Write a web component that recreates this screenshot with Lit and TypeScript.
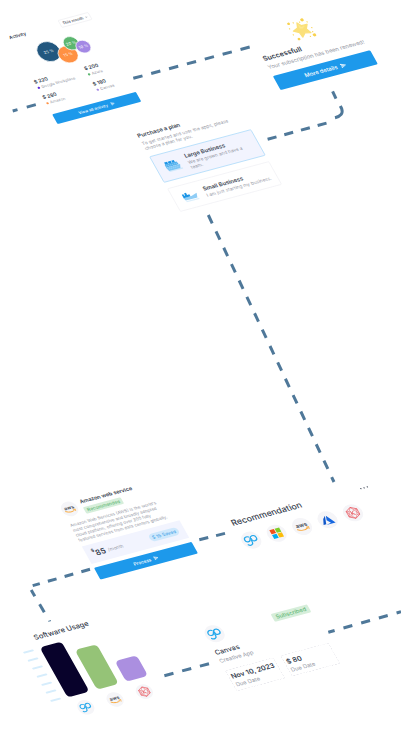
import { LitElement, html, svg, css, TemplateResult } from "lit";
import { customElement, property } from "lit/decorators.js";
import { classMap } from "lit/directives/class-map.js";
import { styleMap } from "lit/directives/style-map.js";

const arrow = html`<svg class="arrow" viewBox="0 0 20 20" aria-hidden="true">
  <path d="M2.500 3 L18 10 L2.500 17 L5.500 10 Z M5.500 10 H11" fill="none" stroke="currentColor" stroke-width="2.400" stroke-linejoin="round" stroke-linecap="round" />
</svg>`;

const marks: Record<string, TemplateResult> = {
  go: svg`<g fill="none" stroke="#23a8ec" stroke-width="3.200" stroke-linecap="round" stroke-linejoin="round">
      <path d="M22 14 C17 10 9 13 9 20 C9 27 19 29 22 22 C24 17 26 13 31 13 C36 13 39 17 39 21 C39 25 36 28 32 28 C27 28 25 24 26 20" />
      <path d="M24 24 V30 C24 37 15 39 11 34" />
    </g>`,
  microsoft: svg`<rect x="11" y="11" width="12" height="12" fill="#f1511b" />
    <rect x="25" y="11" width="12" height="12" fill="#80cc28" />
    <rect x="11" y="25" width="12" height="12" fill="#00adef" />
    <rect x="25" y="25" width="12" height="12" fill="#fbbc09" />`,
  aws: svg`<text x="24" y="25" text-anchor="middle" font-family="Inter, sans-serif" font-size="15" font-weight="600" fill="#3d4653">aws</text>
    <path d="M9 29 Q23 39 36 31" fill="none" stroke="#f9a83a" stroke-width="2.600" stroke-linecap="round" />
    <path d="M33 28.500 L39 28.500 L37.500 34" fill="none" stroke="#f9a83a" stroke-width="2" stroke-linecap="round" stroke-linejoin="round" />`,
  azure: svg`<path d="M23 12 L15 19 L8 35 H15 Z" fill="#0f56c9" />
    <path d="M25 13 L39 37 H14 L28 34 L21 25 Z" fill="#1667e0" />`,
  hex: svg`<g fill="none" stroke="#e9545c" stroke-width="1.800" stroke-linejoin="round">
      <path d="M24 8 L38 16 V32 L24 40 L10 32 V16 Z" />
      <path d="M24 8 L17 18 L10 16 M24 8 L31 18 L38 16 M10 16 L14 24 L10 32 M38 16 L34 24 L38 32 M10 32 L17 31 L24 40 L31 31 L38 32 M17 18 L14 24 L17 31 M31 18 L34 24 L31 31" stroke-width="1.200" />
      <path d="M20 18 V30 M28 18 L21 24 L28 30" stroke-width="2" />
    </g>`,
};

@customElement("brand-mark")
export class BrandMark extends LitElement {
  @property() name = "go";

  static styles = css`
    :host {
      display: block;
      flex: none;
      width: var(--mark-size, 48px);
      height: var(--mark-size, 48px);
      border-radius: 50%;
      background: #f5f5f8;
    }
    svg {
      display: block;
      width: 100%;
      height: 100%;
    }
  `;

  render() {
    return html`<svg viewBox="0 0 48 48" role="img" aria-label=${this.name}>${marks[this.name]}</svg>`;
  }
}

const bubbles = [
  { x: 86, y: 36, r: 33, color: "#22577f", label: "25 %" },
  { x: 134, y: 60, r: 28, color: "#ff9144", label: "15 %" },
  { x: 159, y: 29, r: 22, color: "#5cb670", label: "20 %" },
  { x: 187, y: 49, r: 21, color: "#a388e4", label: "10 %" },
];

const spending = [
  { amount: "$ 220", name: "Google Workplace", tone: "violet" },
  { amount: "$ 200", name: "Azure", tone: "green" },
  { amount: "$ 280", name: "Amazon", tone: "orange" },
  { amount: "$ 180", name: "Canvas", tone: "lilac" },
];

const bars = [
  { height: 172, color: "#08022b", brand: "go" },
  { height: 136, color: "#95c377", brand: "aws" },
  { height: 71, color: "#ab8fe0", brand: "hex" },
];

const connectors = [
  { d: "M133.300 78.300 L249.800 47", dash: "9.500 9" },
  { d: "M35.800 104.600 L12.700 111", dash: "9.400 9.600" },
  { d: "M332.600 91.400 L336 98.600", dash: "none" },
  { d: "M340.300 106 L341.700 108.700 Q344 115.500 335 117.700", dash: "none" },
  { d: "M267.600 139.300 L328 122.700", dash: "9.200 8.100" },
  { d: "M208.300 215 L334 482", dash: "9.200 8.900" },
  { d: "M199.300 539.800 L225 533.400", dash: "9.200 8.100" },
  { d: "M90 569.300 L32.700 585.600", dash: "9 8.400" },
  { d: "M31.200 590 L34.800 596.200", dash: "none" },
  { d: "M39.600 604.200 L44.300 612.300", dash: "none" },
  { d: "M209 663.700 L163.300 676", dash: "9.400 9" },
  { d: "M401 611.700 L328.300 632.300", dash: "4.600 9.200 9.200 9.200 9.200 9.200 9.200 9.200 9.200" },
];

const largeShip = html`<svg class="plan-art" viewBox="0 0 48 40" aria-hidden="true">
  <path d="M6 36 H48" stroke="#cfe8fb" stroke-width="4" />
  <path d="M2 22 H46 L41 34 H6 Z" fill="#7cc6f5" />
  <path d="M3 12 H40 L42 22 H3 Z" fill="#4fb0ee" />
  <path d="M5 5 H14 V12 H5 Z M16 5 H25 V12 H16 Z M27 5 H35 V12 H27 Z" fill="#1c95e6" />
  <path d="M5 17 H39 M5 22 H43 M8 28 H40" stroke="#b5dffa" stroke-width="1.500" stroke-dasharray="4 2" />
</svg>`;

const smallShip = html`<svg class="plan-art" viewBox="0 0 48 40" aria-hidden="true">
  <path d="M6 35 H46" stroke="#dceffc" stroke-width="4" />
  <path d="M3 22 H28 L47 16 L42 31 H6 Z" fill="#8fcdf6" />
  <path d="M4 22 V10 H9 V15 H12 V8 H18 V15 H25 V22 Z" fill="#1c95e6" />
</svg>`;

@customElement("app-root")
export class AppRoot extends LitElement {
  static styles = css`
    :host {
      display: block;
      position: relative;
      min-height: 100vh;
      overflow: hidden;
      background: #ffffff;
      color: #353d4d;
      font-family: Inter, "Liberation Sans", sans-serif;
      --muted: #989ba7;
      --blue: #1d99eb;
    }
    .links {
      position: absolute;
      inset: 0;
      width: 100%;
      height: 100%;
    }
    /* Nodes of the canvas, laid on one tilted plane at a third of their drawn size. */
    .node {
      position: absolute;
      transform: matrix(0.322, -0.0863, 0.1633, 0.2907, 0, 0);
      transform-origin: 0 0;
    }
    h2, p, ul, dl, dd, dt {
      margin: 0;
      padding: 0;
      list-style: none;
    }
    h2 {
      font-size: 17px;
      line-height: 20px;
      font-weight: 600;
    }
    p, .muted {
      color: var(--muted);
    }
    button {
      font: inherit;
      border: 0;
      cursor: pointer;
    }
    .action {
      display: flex;
      align-items: center;
      justify-content: center;
      gap: 10px;
      width: 100%;
      border-radius: 4px;
      background: var(--blue);
      color: #ffffff;
      font-weight: 500;
    }
    .arrow {
      width: 1em;
      height: 1em;
    }

    .activity { width: 260px; }
    .activity header {
      display: flex;
      justify-content: space-between;
      align-items: center;
      padding-right: 8px;
    }
    .activity h2 { font-size: 14px; }
    .period {
      position: relative;
      width: 94px;
    }
    .period select {
      appearance: none;
      display: block;
      box-sizing: border-box;
      width: 100%;
      height: 25px;
      padding: 0 0 0 7px;
      border: 1px solid #dddde3;
      border-radius: 3px;
      background: #ffffff;
      color: inherit;
      font: 500 12px Inter, sans-serif;
    }
    .period svg {
      position: absolute;
      right: 8px;
      top: 9px;
      width: 8px;
      height: 8px;
      pointer-events: none;
    }
    .bubbles {
      display: block;
      width: 100%;
      height: 94px;
      margin: 25px 0 12px;
      overflow: visible;
    }
    .spending {
      display: grid;
      grid-template-columns: 3fr 2fr;
      row-gap: 13px;
      margin-bottom: 27px;
    }
    .spending strong {
      display: block;
      font-size: 15px;
      line-height: 20px;
      font-weight: 600;
    }
    .spending span {
      display: flex;
      align-items: center;
      gap: 5px;
      font-size: 12px;
      line-height: 20px;
      white-space: nowrap;
    }
    .spending i {
      width: 7px;
      height: 7px;
      margin-left: 1px;
      border-radius: 50%;
    }
    .violet { background: #5b2bd8; }
    .green { background: #5cb670; }
    .orange { background: #ff9144; }
    .lilac { background: #a388e4; }
    .activity .action {
      height: 34px;
      font-size: 12px;
    }

    .success { width: 302px; }
    .star {
      display: block;
      width: 72px;
      height: 72px;
      margin: 0 auto 7px;
      overflow: visible;
    }
    .success h2 {
      font-size: 21px;
      line-height: 28px;
    }
    .success p {
      margin: 3px 0 18px;
      font-size: 17px;
      line-height: 24px;
      white-space: nowrap;
    }
    .success .action {
      height: 48px;
      font-size: 17px;
    }

    .plans { width: 316px; }
    .plans p {
      font-size: 14px;
      line-height: 17px;
      white-space: nowrap;
    }
    .plans .intro { margin: 8px 0 19px; }
    .plan {
      display: flex;
      align-items: center;
      gap: 22px;
      box-sizing: border-box;
      min-height: 80px;
      padding: 12px 8px 12px 24px;
      border: 2px solid #f0f0f4;
      border-radius: 4px;
    }
    .plan + .plan { margin-top: 20px; }
    .plan.chosen {
      min-height: 90px;
      border-color: #a5d7fa;
      background: #f2f4fe;
    }
    .plan input {
      position: absolute;
      opacity: 0;
    }
    .plan-art {
      flex: none;
      width: 48px;
      height: 40px;
    }
    .plan h2 { margin-bottom: 3px; }

    .service { width: 303px; }
    .service header {
      display: flex;
      gap: 14px;
    }
    .service h2 {
      font-size: 16px;
      line-height: 22px;
    }
    .badge {
      display: inline-block;
      margin-top: 8px;
      padding: 0 8px;
      border-radius: 4px;
      background: #d6eeda;
      color: #65b978;
      font-size: 14px;
      line-height: 22px;
      font-weight: 500;
    }
    .service p {
      margin: 14px 0 12px;
      font-size: 13px;
      line-height: 17px;
      white-space: nowrap;
    }
    .price {
      display: flex;
      align-items: center;
      box-sizing: border-box;
      height: 60px;
      margin-bottom: 14px;
      padding: 0 18px;
      background: #f2f4fe;
    }
    .price sup {
      align-self: flex-start;
      margin-top: 12px;
      font-size: 14px;
      font-weight: 600;
      line-height: 16px;
    }
    .price strong {
      margin-right: 8px;
      font-size: 24px;
      font-weight: 600;
    }
    .price .muted { font-size: 14px; }
    .saved {
      margin-left: auto;
      padding: 0 9px;
      border-radius: 13px;
      background: #cfe8fc;
      color: #46a5e8;
      font-size: 14px;
      line-height: 26px;
      font-weight: 500;
    }
    .service .action {
      height: 40px;
      font-size: 14px;
    }

    .recommend {
      width: 424px;
      --mark-size: 56px;
    }
    .recommend header {
      display: flex;
      align-items: center;
      justify-content: space-between;
      margin-bottom: 23px;
    }
    .recommend h2, .usage h2 {
      font-size: 26px;
      line-height: 30px;
      font-weight: 500;
    }
    .more {
      display: flex;
      align-items: center;
      gap: 6px;
      height: 30px;
      padding: 0;
      background: none;
    }
    .more i {
      width: 4px;
      height: 4px;
      border-radius: 50%;
      background: #3c4454;
    }
    .row {
      display: flex;
      gap: 23px;
    }

    .usage {
      display: grid;
      grid-template-columns: 32px auto;
      column-gap: 20px;
      row-gap: 20px;
    }
    .usage h2 {
      grid-column: 2;
      font-size: 22px;
      line-height: 28px;
    }
    .axis {
      display: flex;
      flex-direction: column;
      justify-content: space-between;
    }
    .axis i {
      height: 6px;
      border-radius: 3px;
      background: #d6edfc;
    }
    .bars {
      display: flex;
      align-items: flex-end;
      gap: 23px;
      height: 172px;
    }
    .bar {
      width: 68px;
      border-radius: 14px;
    }
    .brands {
      grid-column: 2;
      display: flex;
      gap: 43px;
      padding-left: 10px;
    }

    .app { width: 322px; }
    .app header {
      display: flex;
      align-items: center;
      justify-content: space-between;
      margin-bottom: 16px;
      --mark-size: 56px;
    }
    .app .badge {
      margin: 0 0 2px;
      padding: 0 10px;
      font-size: 17px;
      line-height: 27px;
    }
    .app h2 {
      font-size: 21px;
      line-height: 28px;
      font-weight: 500;
    }
    .app p {
      margin-bottom: 18px;
      font-size: 17px;
      line-height: 28px;
    }
    .facts {
      display: grid;
      grid-template-columns: 1fr 1fr;
      gap: 21px;
    }
    .facts div {
      display: flex;
      flex-direction: column-reverse;
      box-sizing: border-box;
      height: 72px;
      padding: 0 6px 4px;
      border: 2px dashed #e4e4ea;
      border-radius: 4px;
    }
    .facts dd {
      font-size: 21px;
      line-height: 28px;
      font-weight: 600;
      white-space: nowrap;
    }
    .facts dt {
      color: var(--muted);
      font-size: 17px;
      line-height: 28px;
    }
  `;

  private node(kind: string, x: number, y: number, content: TemplateResult) {
    return html`<section
      class=${classMap({ node: true, [kind]: true })}
      style=${styleMap({ left: `${x}px`, top: `${y}px` })}
    >${content}</section>`;
  }

  private activity() {
    return html`
      <header>
        <h2>Activity</h2>
        <div class="period">
          <select aria-label="Period"><option>This month</option></select>
          <svg viewBox="0 0 8 8" aria-hidden="true"><path d="M1 2.500 L4 5.500 L7 2.500" fill="none" stroke="#6d7380" /></svg>
        </div>
      </header>
      <svg class="bubbles" viewBox="0 0 260 94" role="img" aria-label="Spending share">
        ${bubbles.map(
          (b) => svg`<circle cx=${b.x} cy=${b.y} r=${b.r} fill=${b.color} stroke="#ffffff" stroke-width="2" />
            <text x=${b.x} y=${b.y + 4} text-anchor="middle" font-size="12" font-weight="500" fill="#ffffff" fill-opacity="0.850">${b.label}</text>`
        )}
      </svg>
      <ul class="spending">
        ${spending.map(
          (s) => html`<li><strong>${s.amount}</strong><span class="muted"><i class=${s.tone}></i>${s.name}</span></li>`
        )}
      </ul>
      <button class="action">View all activity ${arrow}</button>`;
  }

  private success() {
    return html`
      <svg class="star" viewBox="0 0 72 72" aria-hidden="true">
        <path d="M31 12 L39 24 L56 24 L47 37 L54 52 L37 48 L25 59 L23 43 L9 34 L25 28 Z" fill="#fbe07a" stroke="#fbe07a" stroke-width="4" stroke-linejoin="round" />
        <path d="M31 16 L36 28 L48 27 L38 33 L30 31 Z" fill="#fce891" />
        <g fill="#f8d24f">
          <circle cx="7" cy="8" r="4" /><circle cx="49" cy="7" r="5" />
          <circle cx="60" cy="62" r="5" /><circle cx="12" cy="62" r="4" />
          <circle cx="21" cy="9" r="2" /><circle cx="39" cy="12" r="2" />
          <circle cx="60" cy="17" r="2" /><circle cx="64" cy="38" r="2" />
          <circle cx="47" cy="63" r="2" /><circle cx="2" cy="24" r="2" />
          <circle cx="3" cy="45" r="2" /><circle cx="60" cy="51" r="2" />
        </g>
      </svg>
      <h2>Successfull</h2>
      <p>Your subscription has been renewed!</p>
      <button class="action">More details ${arrow}</button>`;
  }

  private plans() {
    return html`
      <h2>Purchase a plan</h2>
      <p class="intro">To get started and user the apps, please<br />choose a plan for you.</p>
      <label class="plan chosen">
        <input type="radio" name="plan" checked />
        ${largeShip}
        <div><h2>Large Business</h2><p>We are grown and have a<br />team.</p></div>
      </label>
      <label class="plan">
        <input type="radio" name="plan" />
        ${smallShip}
        <div><h2>Small Business</h2><p>I am just starting my business.</p></div>
      </label>`;
  }

  private service() {
    return html`
      <header>
        <brand-mark name="aws"></brand-mark>
        <div><h2>Amazon web service</h2><span class="badge">Recommended</span></div>
      </header>
      <p>Amazon Web Services (AWS) is the world's<br />most comprehensive and broadly adopted<br />cloud platform, offering over 200 fully<br />featured services from data centers globally.</p>
      <div class="price">
        <sup>$</sup><strong>85</strong><span class="muted">/month</span>
        <span class="saved">$ 15 Saved</span>
      </div>
      <button class="action">Process ${arrow}</button>`;
  }

  private recommend() {
    return html`
      <header>
        <h2>Recommendation</h2>
        <button class="more" aria-label="More"><i></i><i></i><i></i></button>
      </header>
      <div class="row">
        ${["go", "microsoft", "aws", "azure", "hex"].map((n) => html`<brand-mark name=${n}></brand-mark>`)}
      </div>`;
  }

  private usage() {
    return html`
      <h2>Software Usage</h2>
      <div class="axis">${Array.from({ length: 7 }, () => html`<i></i>`)}</div>
      <div class="bars">
        ${bars.map((b) => html`<div class="bar" style=${styleMap({ height: `${b.height}px`, background: b.color })}></div>`)}
      </div>
      <div class="brands">${bars.map((b) => html`<brand-mark name=${b.brand}></brand-mark>`)}</div>`;
  }

  private app() {
    return html`
      <header><brand-mark name="go"></brand-mark><span class="badge">Subscribed</span></header>
      <h2>Canvas</h2>
      <p>Creative App</p>
      <dl class="facts">
        <div><dt>Due Date</dt><dd>Nov 10, 2023</dd></div>
        <div><dt>Due Date</dt><dd>$ 80</dd></div>
      </dl>`;
  }

  render() {
    return html`
      <svg class="links" aria-hidden="true">
        ${connectors.map(
          (c) => svg`<path d=${c.d} fill="none" stroke="#4f7899" stroke-width="3" stroke-dasharray=${c.dash} />`
        )}
        <path d="M48.300 621.300 L51 620.600" stroke="#4f7899" />
      </svg>
      ${this.node("activity", 7, 34, this.activity())}
      ${this.node("success", 248, 32, this.success())}
      ${this.node("plans", 136, 133, this.plans())}
      ${this.node("service", 58, 504, this.service())}
      ${this.node("recommend", 229, 519, this.recommend())}
      ${this.node("usage", 15, 638, this.usage())}
      ${this.node("app", 201, 628, this.app())}
    `;
  }
}
